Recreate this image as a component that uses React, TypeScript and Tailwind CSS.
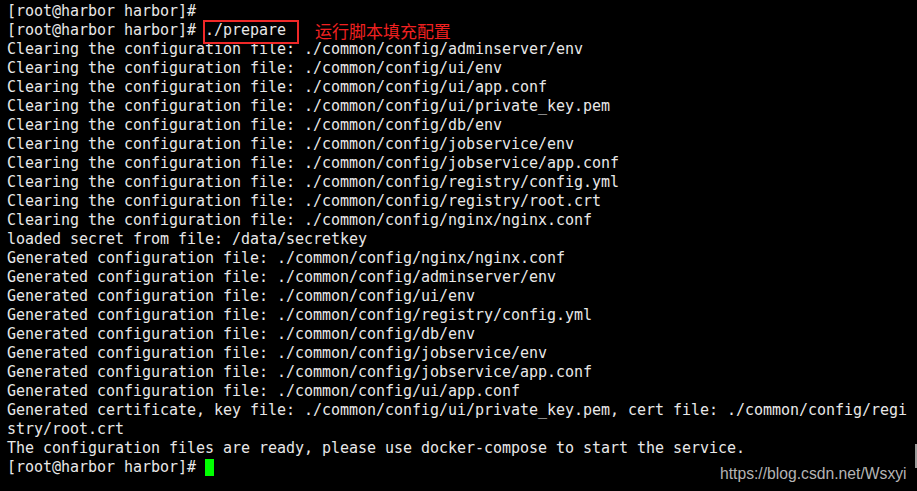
import React from "react";

const lines: string[] = [
  "Clearing the configuration file: ./common/config/adminserver/env",
  "Clearing the configuration file: ./common/config/ui/env",
  "Clearing the configuration file: ./common/config/ui/app.conf",
  "Clearing the configuration file: ./common/config/ui/private_key.pem",
  "Clearing the configuration file: ./common/config/db/env",
  "Clearing the configuration file: ./common/config/jobservice/env",
  "Clearing the configuration file: ./common/config/jobservice/app.conf",
  "Clearing the configuration file: ./common/config/registry/config.yml",
  "Clearing the configuration file: ./common/config/registry/root.crt",
  "Clearing the configuration file: ./common/config/nginx/nginx.conf",
  "loaded secret from file: /data/secretkey",
  "Generated configuration file: ./common/config/nginx/nginx.conf",
  "Generated configuration file: ./common/config/adminserver/env",
  "Generated configuration file: ./common/config/ui/env",
  "Generated configuration file: ./common/config/registry/config.yml",
  "Generated configuration file: ./common/config/db/env",
  "Generated configuration file: ./common/config/jobservice/env",
  "Generated configuration file: ./common/config/jobservice/app.conf",
  "Generated configuration file: ./common/config/ui/app.conf",
  "Generated certificate, key file: ./common/config/ui/private_key.pem, cert file: ./common/config/regi",
  "stry/root.crt",
  "The configuration files are ready, please use docker-compose to start the service.",
];

export default function App() {
  return (
    <div className="relative w-[917px] h-[491px] bg-black overflow-hidden">
      <div
        className="pt-[2px] pl-[7px] text-[15px] leading-[19px] tracking-[-0.03px] text-[#e8e8e8] whitespace-pre"
        style={{ fontFamily: '"DejaVu Sans Mono", monospace' }}
      >
        <div>[root@harbor harbor]#</div>
        <div className="flex items-center">
          <span>[root@harbor harbor]# </span>
          <span className="relative">
            ./prepare{" "}
            <span className="absolute left-[-2px] top-[-1px] w-[96px] h-[24px] border-2 border-[#f02828]" />
          </span>
          <span
            className="ml-[20px] text-[17px] text-[#f02020]"
            style={{ fontFamily: '"Noto Sans CJK SC", sans-serif' }}
          >
            运行脚本填充配置
          </span>
        </div>
        {lines.map((l, i) => (
          <div key={i}>{l}</div>
        ))}
        <div className="flex items-center">
          <span>[root@harbor harbor]# </span>
          <span className="inline-block w-[9px] h-[17px] bg-[#00ff00]" />
        </div>
      </div>
      <div
        className="absolute left-[720px] top-[462px] text-[15.7px] text-[#b4b4b4]"
        style={{ fontFamily: '"Liberation Sans", Arial, sans-serif' }}
      >
        https://blog.csdn.net/Wsxyi
      </div>
      <div className="absolute left-[915px] top-[444px] w-[2px] h-[24px] bg-[#9a9a9a]" />
    </div>
  );
}
